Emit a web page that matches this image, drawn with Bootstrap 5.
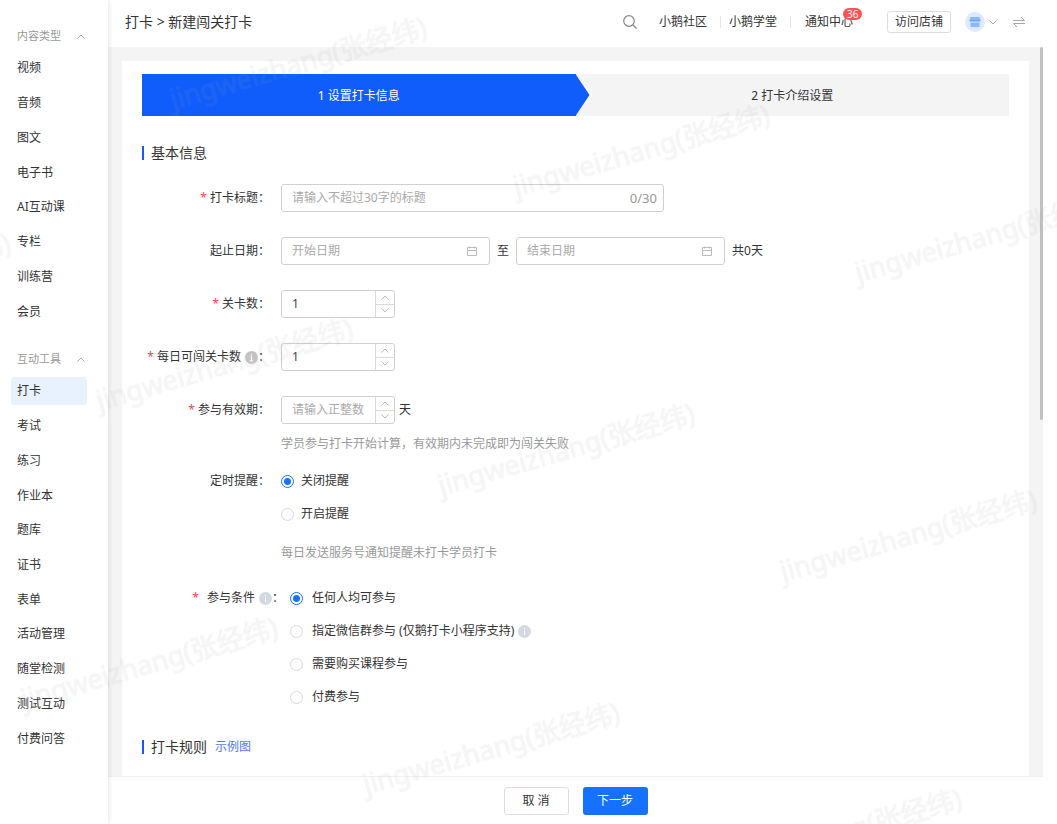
<!DOCTYPE html>
<html lang="zh-CN">
<head>
<meta charset="utf-8">
<meta name="viewport" content="width=device-width, initial-scale=1">
<title>新建闯关打卡</title>
<link href="https://cdn.jsdelivr.net/npm/bootstrap@5.3.0/dist/css/bootstrap.min.css" rel="stylesheet">
<style>
  body { font-family: "Noto Sans", "Noto Sans CJK SC", sans-serif; font-size: 12px; line-height: 20px; color: #333; background: #fff; }
  a { color: inherit; text-decoration: none; }
  svg { display: block; flex: none; }

  .side-nav { width: 108px; padding-top: 23px; box-shadow: 0 0 5px rgba(0,0,0,.14); z-index: 2; }
  .side-head { height: 28px; padding: 0 23px 2px 17px; color: #999; font-size: 11px; border: 0; background: none; width: 100%; }
  .side-list { display: grid; grid-auto-rows: 1fr; align-items: center; margin: 0 21px 17px 11px; padding: 0; list-style: none; }
  .side-list.types { min-height: 278px; }
  .side-list.tools { min-height: 382px; }
  .side-list a { display: block; padding: 4px 6px; border-radius: 3px; }
  .side-list a.active { background: #e8f2ff; }

  .top-bar { height: 47px; padding: 0 32px 3px 17px; }
  .crumbs { font-size: 14px; }
  .top-links li + li::before { content: ""; width: 1px; height: 12px; background: #e6e6e6; }
  .top-links li + li { margin-left: 13px; }
  .top-links a { margin-left: 8px; }
  .top-links li:last-child a { margin-left: 14px; }
  .count { top: -4px; left: 38px; height: 12px; padding: 0 4px; line-height: 12px; font-size: 10px; border-radius: 6px; background: #fa5555; color: #fff; }
  .btn-line { height: 22px; margin: 0 14px 0 34px; padding: 0 7px; border: 1px solid #ddd; border-radius: 3px; background: #fff; font-size: 12px; line-height: 20px; color: #333; }
  .icon-btn { border: 0; background: none; padding: 0; }
  .find { margin-right: 14px; }

  .work-area { background: #f4f4f4; margin-right: 14px; padding: 14px 10px 0 14px; min-height: 0; }
  .panel { background: #fff; padding: 13px 20px 0; }
  .thumb { width: 3px; height: 51.2%; background: #c1c1c1; border-radius: 2px; top: 0; right: 0; }

  .step { flex: 1 1 0; height: 42px; padding-top: 2px; background: #f4f4f4; }
  .step.current { background: #115dfc; color: #fff; }
  .step.current::before, .step.current::after { content: ""; position: absolute; top: 0; bottom: 0; left: 100%; clip-path: polygon(0 0, 100% 50%, 0 100%); }
  .step.current::before { width: 17px; background: #fff; }
  .step.current::after { width: 14px; background: #115dfc; }

  .sec-title { font-size: 14px; line-height: 20px; margin: 0; gap: 7px; font-weight: 400; }
  .sec-title::before { content: ""; width: 2px; height: 14px; background: #115dfc; }
  .sec-first { margin: 27px 0 21px; }
  .sec-next { margin-top: 30px; }

  .form-list { display: grid; gap: 25px; }
  .form-line { display: grid; grid-template-columns: 128px 1fr; column-gap: 11px; }
  .form-line.wide { grid-template-columns: 142px 1fr; column-gap: 6px; }
  .lab { display: flex; justify-content: flex-end; align-items: center; height: 20px; white-space: nowrap; }
  .tall .lab { height: 28px; }
  .req::before { content: "*"; color: #f5454f; margin-right: 3px; }
  .wide .req::before { margin-right: 8px; }
  .field { display: flex; align-items: center; height: 28px; border: 1px solid #d0d0d0; border-radius: 3px; background: #fff; overflow: hidden; }
  .field input { flex: 1 1 0; min-width: 0; width: 0; border: 0; outline: 0; background: none; padding: 0 0 0 10px; color: #444; }
  .field input::placeholder { color: #aaa; opacity: 1; }
  .field input[type=number] { appearance: textfield; -moz-appearance: textfield; }
  .field input::-webkit-inner-spin-button, .field input::-webkit-outer-spin-button { -webkit-appearance: none; margin: 0; }
  .w-title { width: 383px; }
  .w-date { width: 209px; padding-right: 12px; }
  .w-num { width: 114px; }
  .date-range { gap: 7px; }
  .counter { font-size: 13px; color: #999; padding-right: 6px; }
  .steppers { width: 19px; border-left: 1px solid #d9d9d9; align-self: stretch; }
  .steppers button { flex: 1; display: flex; align-items: center; justify-content: center; border: 0; background: none; padding: 0; }
  .steppers button + button { border-top: 1px solid #d9d9d9; }
  .hint { color: #999; margin: 0; padding-top: 6px; }
  .tall .hint { padding-top: 10px; }
  .after-hint { margin-top: -8px; }

  .pick { display: flex; align-items: center; gap: 7px; height: 20px; }
  .wide .pick { gap: 9px; }
  .pick .form-check-input { width: 13px; height: 13px; margin: 0; border: 1px solid #d9d9d9; box-shadow: none; flex: none; }
  .pick .form-check-input:checked { border-color: #1472ff; background: radial-gradient(circle, #1472ff 0 3px, #fff 4px); }
  .picks { display: grid; gap: 13px; }

  .foot { height: 48px; margin-right: 14px; border-top: 1px solid #f0f0f0; gap: 14px; }
  .foot .btn { width: 65px; height: 28px; padding: 0; font-size: 12px; border-radius: 3px; }
  .btn-cancel { border-color: #ddd; background: #fff; color: #333; }
  .btn-next { background: #1472ff; color: #fff; }

  .stamp { position: absolute; inset: 0; width: 100%; height: 100%; pointer-events: none; z-index: 5; }
  .stamp g { font-size: 27px; fill: #a0a0a0; stroke: #a0a0a0; stroke-width: 1; opacity: .1; text-anchor: middle; }
</style>
</head>
<body>
<div class="d-flex vh-100 position-relative overflow-hidden">
  <nav class="side-nav flex-shrink-0 bg-white" aria-label="功能菜单">
    <button class="side-head d-flex align-items-center justify-content-between">内容类型
      <svg width="8" height="5" viewBox="0 0 8 5" fill="none" stroke="#aaa"><path d="M.5 4.500 4 1l3.500 3.500"/></svg></button>
    <ul class="side-list types">
      <li><a href="#">视频</a></li>
      <li><a href="#">音频</a></li>
      <li><a href="#">图文</a></li>
      <li><a href="#">电子书</a></li>
      <li><a href="#">AI互动课</a></li>
      <li><a href="#">专栏</a></li>
      <li><a href="#">训练营</a></li>
      <li><a href="#">会员</a></li>
    </ul>
    <button class="side-head d-flex align-items-center justify-content-between">互动工具
      <svg width="8" height="5" viewBox="0 0 8 5" fill="none" stroke="#aaa"><path d="M.5 4.500 4 1l3.500 3.500"/></svg></button>
    <ul class="side-list tools">
      <li><a href="#" class="active" aria-current="page">打卡</a></li>
      <li><a href="#">考试</a></li>
      <li><a href="#">练习</a></li>
      <li><a href="#">作业本</a></li>
      <li><a href="#">题库</a></li>
      <li><a href="#">证书</a></li>
      <li><a href="#">表单</a></li>
      <li><a href="#">活动管理</a></li>
      <li><a href="#">随堂检测</a></li>
      <li><a href="#">测试互动</a></li>
      <li><a href="#">付费问答</a></li>
    </ul>
  </nav>

  <div class="d-flex flex-column flex-grow-1">
    <header class="top-bar d-flex align-items-center justify-content-between flex-shrink-0">
      <div class="crumbs"><a href="#">打卡</a> &gt; <span>新建闯关打卡</span></div>
      <div class="d-flex align-items-center">
        <button class="icon-btn find" aria-label="搜索">
          <svg width="14" height="14" viewBox="0 0 14 14" fill="none" stroke="#888" stroke-width="1.200"><circle cx="6" cy="6" r="5.300"/><path d="m10 10 3.500 3.500"/></svg></button>
        <ul class="top-links d-flex list-unstyled mb-0">
          <li class="d-flex align-items-center"><a href="#">小鹅社区</a></li>
          <li class="d-flex align-items-center"><a href="#">小鹅学堂</a></li>
          <li class="d-flex align-items-center"><a href="#" class="position-relative">通知中心<span class="count position-absolute">36</span></a></li>
        </ul>
        <button class="btn-line">访问店铺</button>
        <button class="icon-btn d-flex align-items-center gap-1" aria-label="店铺">
          <svg width="20" height="20" viewBox="0 0 20 20"><circle cx="10" cy="10" r="10" fill="#deebff"/><path d="M5.500 5h9l1 3.500h-11z" fill="#8cb7ff"/><path d="M4.500 8h11v1.500h-11z" fill="#6ba3ff"/><path d="M5.500 10.500h9V15h-9z" fill="#8cb7ff"/></svg>
          <svg width="8" height="5" viewBox="0 0 8 5" fill="none" stroke="#aaa"><path d="M.5.5 4 4 7.500.5"/></svg>
        </button>
        <button class="icon-btn ms-3" aria-label="切换">
          <svg width="12" height="12" viewBox="0 0 12 12" fill="none" stroke="#aaa"><path d="M0 4.500h11.500L8 1M12 7.500H.5L4 11"/></svg></button>
      </div>
    </header>

    <main class="work-area position-relative d-flex flex-column flex-grow-1 overflow-hidden">
      <div class="thumb position-absolute"></div>
      <div class="panel flex-grow-1 me-1">
        <div class="d-flex">
          <div class="step current position-relative d-flex align-items-center justify-content-center">1 设置打卡信息</div>
          <div class="step d-flex align-items-center justify-content-center">2 打卡介绍设置</div>
        </div>

        <h2 class="sec-title sec-first d-flex align-items-center">基本信息</h2>

        <form class="form-list">
          <div class="form-line tall">
            <label class="lab req" for="title">打卡标题：</label>
            <div class="field w-title">
              <input id="title" type="text" placeholder="请输入不超过30字的标题">
              <span class="counter">0/30</span>
            </div>
          </div>

          <div class="form-line tall">
            <label class="lab" for="start">起止日期：</label>
            <div class="date-range d-flex align-items-center">
              <div class="field w-date"><input id="start" type="text" placeholder="开始日期">
                <svg width="10" height="11" viewBox="0 0 10 11" fill="none" stroke="#bbb"><path d="M.5 1.500h9v8h-9zM.5 4.500h9M2.500.5v2M7.500.5v2"/></svg></div>
              <label for="end">至</label>
              <div class="field w-date"><input id="end" type="text" placeholder="结束日期">
                <svg width="10" height="11" viewBox="0 0 10 11" fill="none" stroke="#bbb"><path d="M.5 1.500h9v8h-9zM.5 4.500h9M2.500.5v2M7.500.5v2"/></svg></div>
              <span>共0天</span>
            </div>
          </div>

          <div class="form-line tall">
            <label class="lab req" for="levels">关卡数：</label>
            <div class="field w-num"><input id="levels" type="number" value="1">
              <div class="steppers d-flex flex-column">
                <button type="button" aria-label="增加"><svg width="8" height="5" viewBox="0 0 8 5" fill="none" stroke="#bbb"><path d="M.5 4.500 4 1l3.500 3.500"/></svg></button>
                <button type="button" aria-label="减少"><svg width="8" height="5" viewBox="0 0 8 5" fill="none" stroke="#bbb"><path d="M.5.5 4 4 7.500.5"/></svg></button>
              </div></div>
          </div>

          <div class="form-line tall">
            <label class="lab req" for="daily">每日可闯关卡数<svg class="ms-1" width="13" height="13" viewBox="0 0 13 13"><circle cx="6.500" cy="6.500" r="6.500" fill="#c6c6c6"/><path d="M6.500 3v1.500M5.500 5.700h1v4M5 9.700h3" stroke="#fff" fill="none"/></svg>：</label>
            <div class="field w-num"><input id="daily" type="number" value="1">
              <div class="steppers d-flex flex-column">
                <button type="button" aria-label="增加"><svg width="8" height="5" viewBox="0 0 8 5" fill="none" stroke="#bbb"><path d="M.5 4.500 4 1l3.500 3.500"/></svg></button>
                <button type="button" aria-label="减少"><svg width="8" height="5" viewBox="0 0 8 5" fill="none" stroke="#bbb"><path d="M.5.5 4 4 7.500.5"/></svg></button>
              </div></div>
          </div>

          <div class="form-line tall">
            <label class="lab req" for="valid">参与有效期：</label>
            <div>
              <div class="d-flex align-items-center gap-1">
                <div class="field w-num"><input id="valid" type="number" placeholder="请输入正整数">
                  <div class="steppers d-flex flex-column">
                    <button type="button" aria-label="增加"><svg width="8" height="5" viewBox="0 0 8 5" fill="none" stroke="#bbb"><path d="M.5 4.500 4 1l3.500 3.500"/></svg></button>
                    <button type="button" aria-label="减少"><svg width="8" height="5" viewBox="0 0 8 5" fill="none" stroke="#bbb"><path d="M.5.5 4 4 7.500.5"/></svg></button>
                  </div></div>
                <span>天</span>
              </div>
              <p class="hint">学员参与打卡开始计算，有效期内未完成即为闯关失败</p>
            </div>
          </div>

          <div class="form-line after-hint" role="radiogroup" aria-labelledby="remind">
            <span class="lab" id="remind">定时提醒：</span>
            <div class="picks">
              <label class="pick"><input class="form-check-input" type="radio" name="remind" checked>关闭提醒</label>
              <label class="pick"><input class="form-check-input" type="radio" name="remind">开启提醒</label>
              <p class="hint">每日发送服务号通知提醒未打卡学员打卡</p>
            </div>
          </div>

          <div class="form-line wide" role="radiogroup" aria-labelledby="cond">
            <span class="lab req" id="cond">参与条件<svg class="ms-1" width="13" height="13" viewBox="0 0 13 13"><circle cx="6.500" cy="6.500" r="6.500" fill="#d3d8e3"/><path d="M6.500 3v1.200M6.500 5.500V10" stroke="#fff"/></svg>：</span>
            <div class="picks">
              <label class="pick"><input class="form-check-input" type="radio" name="cond" checked>任何人均可参与</label>
              <label class="pick"><input class="form-check-input" type="radio" name="cond"><span class="d-flex align-items-center gap-1">指定微信群参与 (仅鹅打卡小程序支持)<svg width="13" height="13" viewBox="0 0 13 13"><circle cx="6.500" cy="6.500" r="6.500" fill="#d3d8e3"/><path d="M6.500 3v1.200M6.500 5.500V10" stroke="#fff"/></svg></span></label>
              <label class="pick"><input class="form-check-input" type="radio" name="cond">需要购买课程参与</label>
              <label class="pick"><input class="form-check-input" type="radio" name="cond">付费参与</label>
            </div>
          </div>
        </form>

        <div class="sec-next d-flex align-items-center gap-2">
          <h2 class="sec-title d-flex align-items-center">打卡规则</h2>
          <a href="#" style="color:#5279f2">示例图</a>
        </div>
      </div>
    </main>

    <footer class="foot d-flex align-items-center justify-content-center flex-shrink-0">
      <button class="btn btn-cancel">取 消</button>
      <button class="btn btn-next">下一步</button>
    </footer>
  </div>

  <!-- account watermark repeated over the whole workspace -->
  <svg class="stamp" aria-hidden="true"><g>
    <text transform="translate(301 73) rotate(-16)">jingweizhang(张经纬)</text>
    <text transform="translate(644 160) rotate(-16)">jingweizhang(张经纬)</text>
    <text transform="translate(986 246) rotate(-16)">jingweizhang(张经纬)</text>
    <text transform="translate(-115 289) rotate(-16)">jingweizhang(张经纬)</text>
    <text transform="translate(227 374) rotate(-16)">jingweizhang(张经纬)</text>
    <text transform="translate(569 459) rotate(-16)">jingweizhang(张经纬)</text>
    <text transform="translate(911 545) rotate(-16)">jingweizhang(张经纬)</text>
    <text transform="translate(152 673) rotate(-16)">jingweizhang(张经纬)</text>
    <text transform="translate(494 758) rotate(-16)">jingweizhang(张经纬)</text>
    <text transform="translate(836 844) rotate(-16)">jingweizhang(张经纬)</text>
  </g></svg>
</div>
<script src="https://cdn.jsdelivr.net/npm/bootstrap@5.3.0/dist/js/bootstrap.bundle.min.js"></script>
</body>
</html>
